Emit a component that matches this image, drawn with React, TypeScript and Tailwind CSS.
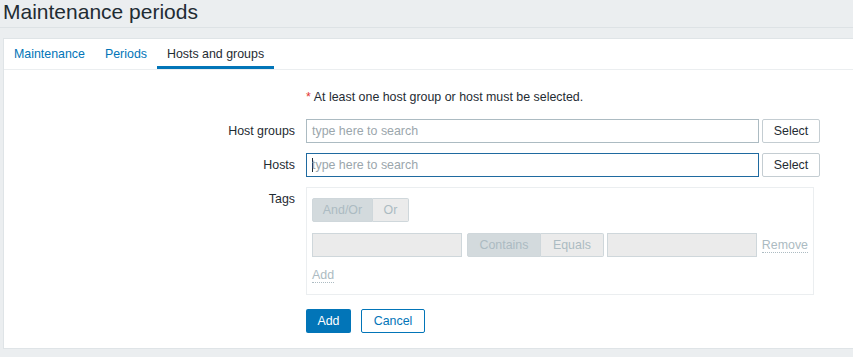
import React from "react";

const font = { fontFamily: '"Liberation Sans", Arial, sans-serif' };

function Tab({ label, active }: { label: string; active?: boolean }) {
  return (
    <div
      className={
        "h-[30px] px-[10px] flex items-center box-border " +
        (active ? "border-b-[3px] border-[#0275b8] text-[#1f2c33] pt-[3px]" : "text-[#0275b8]")
      }
    >
      {label}
    </div>
  );
}

function Label({ children }: { children: React.ReactNode }) {
  return <div className="h-[24px] flex items-center justify-end text-[#1f2c33]">{children}</div>;
}

export default function App() {
  return (
    <div className="w-[853px] h-[357px] overflow-hidden bg-[#ebeef0] text-[12.4px]" style={font}>
      <div className="h-[28px] border-b border-[#dde2e5] pl-[3px]">
        <h1 className="text-[21px] leading-[22px] text-[#1f2c33] pt-[1px]">Maintenance periods</h1>
      </div>
      <div className="mt-[10px] ml-[3px] h-[311px] border border-r-0 border-[#dfe4e7] bg-white box-border">
        <div className="h-[31px] border-b border-[#ebeef0] flex box-border">
          <Tab label="Maintenance" />
          <Tab label="Periods" />
          <Tab label="Hosts and groups" active />
        </div>
        <div className="grid grid-cols-[291px_1fr] gap-x-[11px] gap-y-[10px] pt-[15px]">
          <div />
          <div className="h-[24px] flex items-center text-[#1f2c33]">
            <span className="text-[#e33734] mr-[3px]">*</span>At least one host group or host must be selected.
          </div>

          <Label>Host groups</Label>
          <div className="flex gap-[3px]">
            <div className="w-[453px] h-[24px] border border-[#acbbc2] flex items-center px-[5px] text-[#9ba6ac] box-border">
              type here to search
            </div>
            <div className="w-[58px] h-[24px] border border-[#c4cdd2] rounded-[2px] flex items-center justify-center text-[#1f2c33] box-border">
              Select
            </div>
          </div>

          <Label>Hosts</Label>
          <div className="flex gap-[3px]">
            <div className="w-[453px] h-[24px] border border-[#1f6aa0] flex items-center px-[5px] text-[#9ba6ac] box-border">
              <span className="w-px h-[14px] bg-[#1f2c33] mr-[-1px]" />
              type here to search
            </div>
            <div className="w-[58px] h-[24px] border border-[#c4cdd2] rounded-[2px] flex items-center justify-center text-[#1f2c33] box-border">
              Select
            </div>
          </div>

          <div className="h-[24px] flex items-center justify-end text-[#1f2c33] self-start">Tags</div>
          <div className="w-[508px] h-[108px] border border-[#ebeef0] box-border px-[5px] pt-[10px]">
            <div className="flex">
              <div className="h-[24px] w-[61px] flex items-center justify-center bg-[#d3dadd] border border-[#cfd7db] rounded-l-[2px] text-[#acbbc2] box-border">
                And/Or
              </div>
              <div className="h-[24px] w-[36px] flex items-center justify-center bg-[#ebebeb] border border-l-0 border-[#cfd7db] rounded-r-[2px] text-[#acbbc2] box-border">
                Or
              </div>
            </div>
            <div className="flex items-center mt-[11px]">
              <div className="w-[150px] h-[24px] bg-[#ebebeb] border border-[#cfd7db] box-border" />
              <div className="flex ml-[5px]">
                <div className="h-[24px] w-[74px] flex items-center justify-center bg-[#d3dadd] border border-[#cfd7db] rounded-l-[2px] text-[#acbbc2] box-border">
                  Contains
                </div>
                <div className="h-[24px] w-[63px] flex items-center justify-center bg-[#ebebeb] border border-l-0 border-[#cfd7db] rounded-r-[2px] text-[#acbbc2] box-border">
                  Equals
                </div>
              </div>
              <div className="w-[150px] h-[24px] bg-[#ebebeb] border border-[#cfd7db] ml-[3px] box-border" />
              <span className="ml-[5px] text-[#acbbc2] border-b border-dotted border-[#acbbc2] leading-[14px]">Remove</span>
            </div>
            <div className="h-[24px] mt-[6px] flex items-center">
              <span className="text-[#acbbc2] border-b border-dotted border-[#acbbc2] leading-[14px]">Add</span>
            </div>
          </div>

          <div />
          <div className="flex gap-[10px] mt-[4px]">
            <div className="w-[45px] h-[24px] bg-[#0275b8] rounded-[2px] text-white flex items-center justify-center">
              Add
            </div>
            <div className="w-[64px] h-[24px] border border-[#0275b8] rounded-[2px] text-[#0275b8] flex items-center justify-center box-border">
              Cancel
            </div>
          </div>
        </div>
      </div>
    </div>
  );
}
